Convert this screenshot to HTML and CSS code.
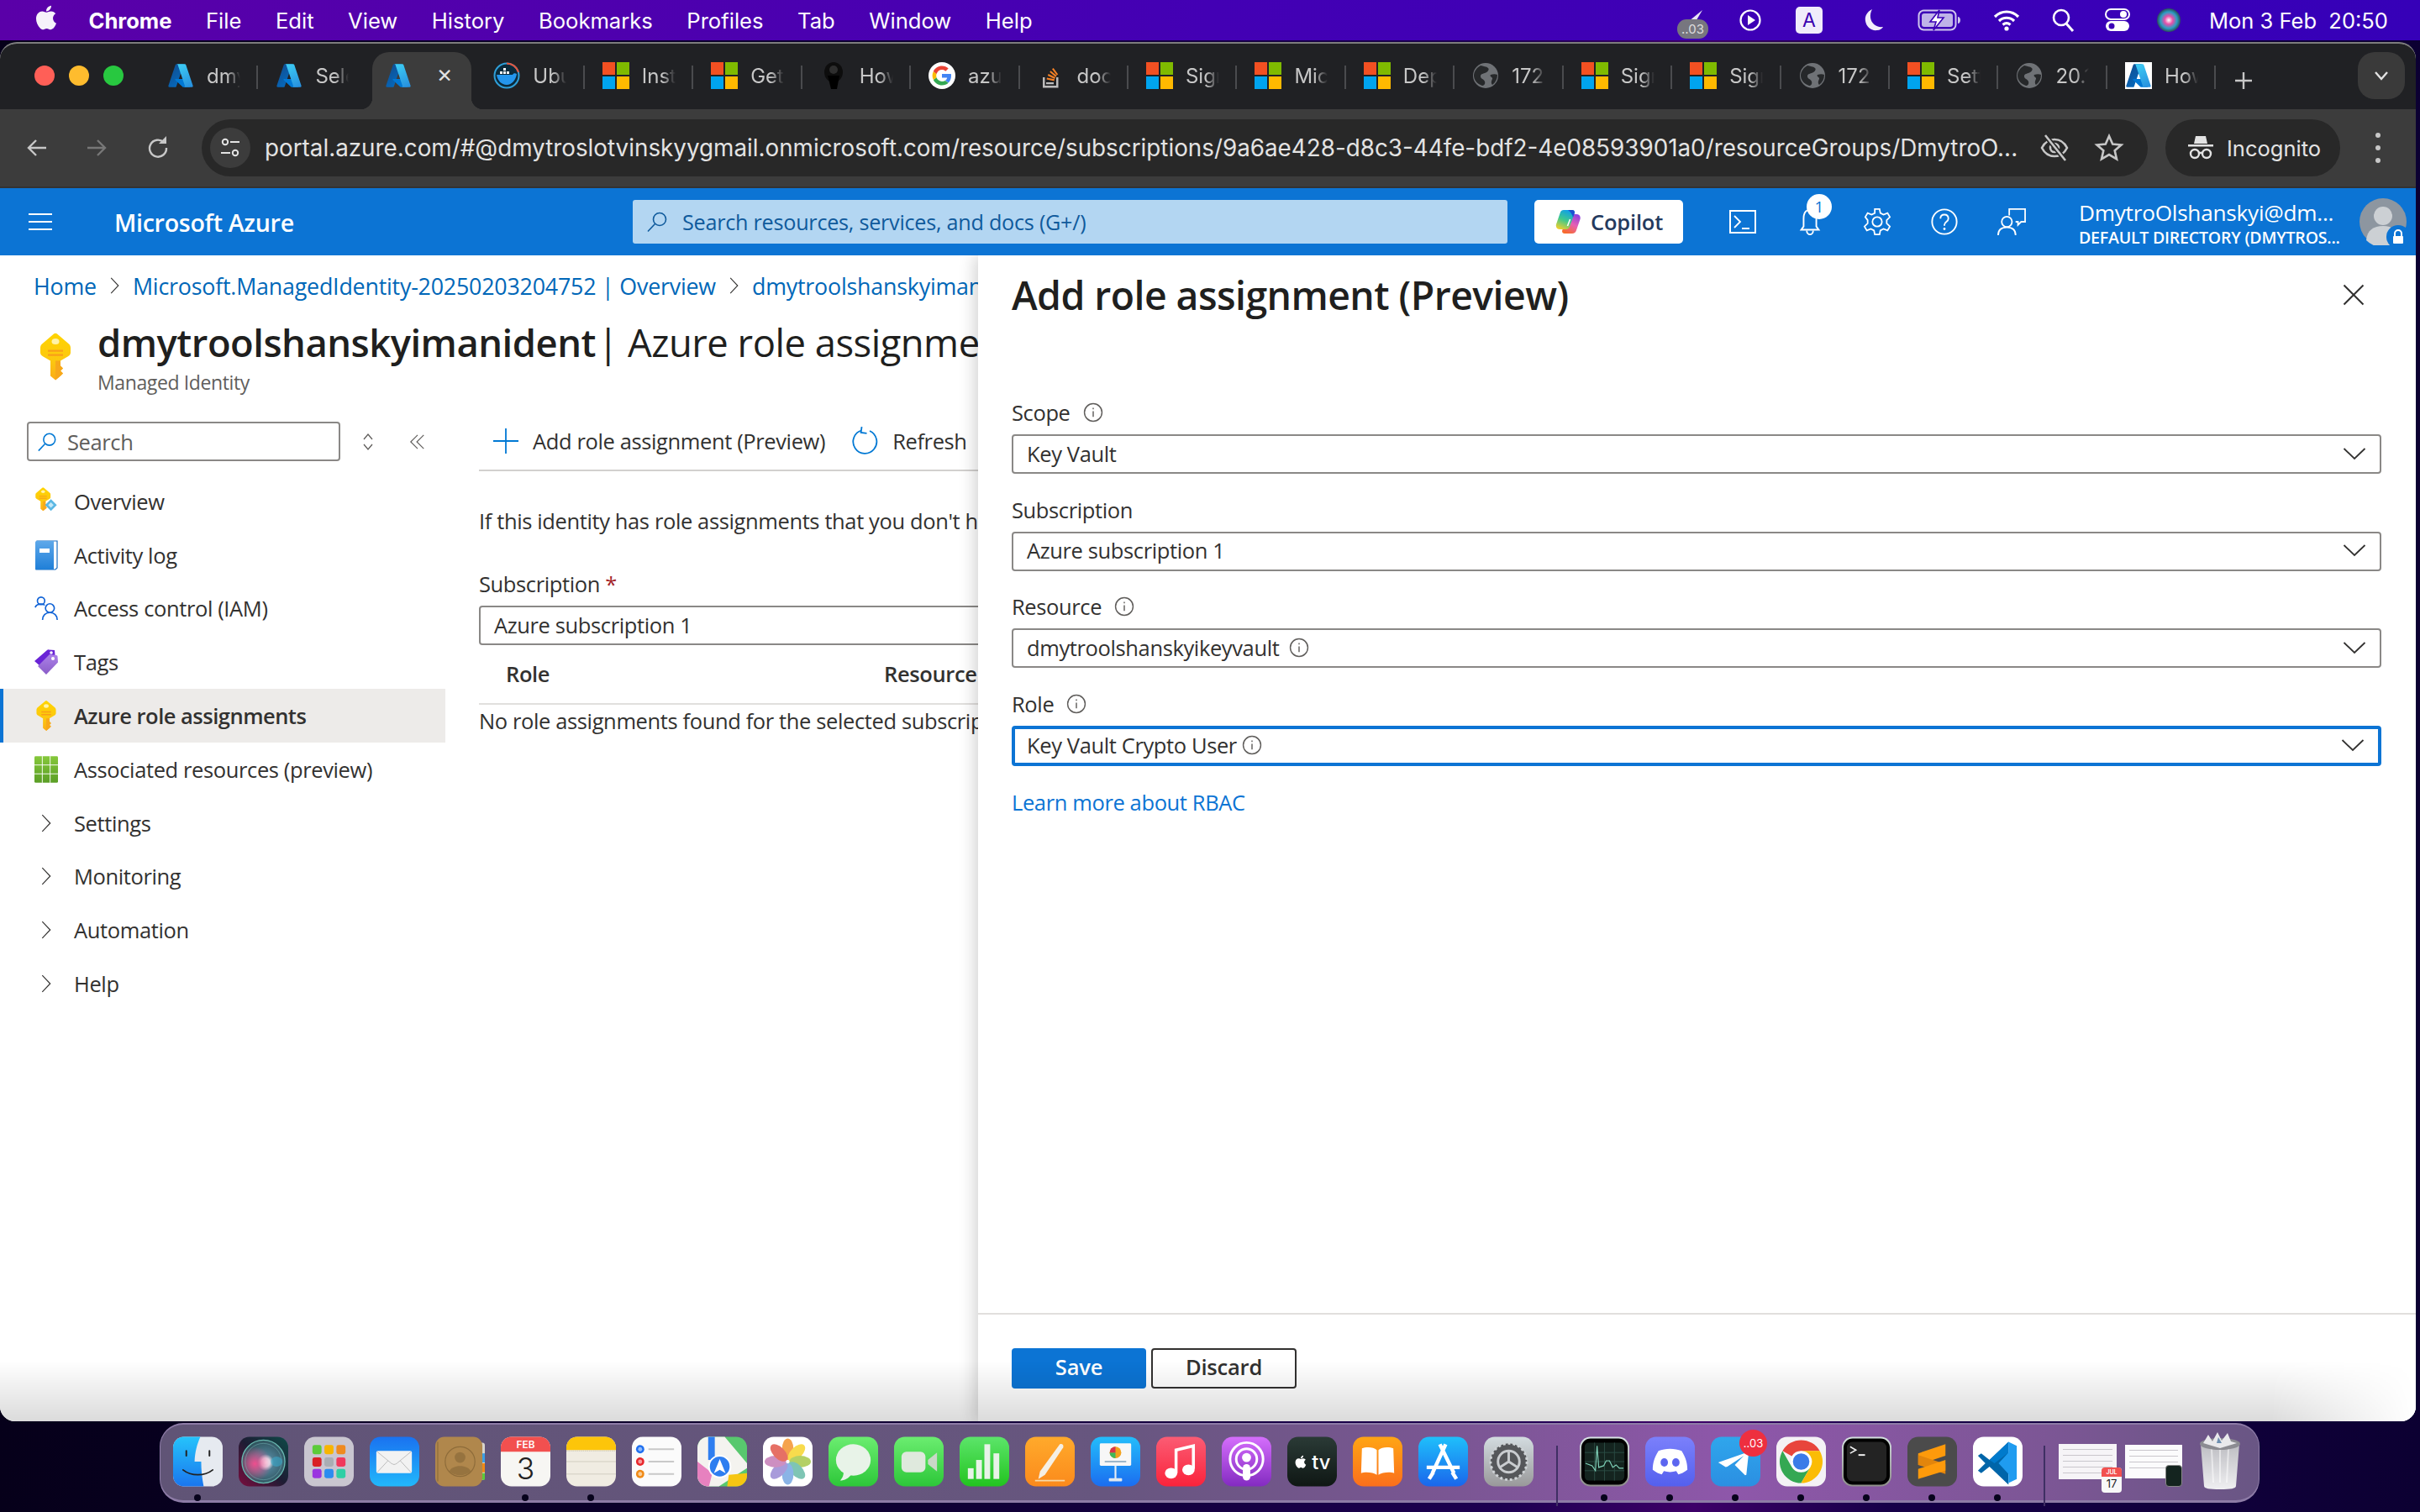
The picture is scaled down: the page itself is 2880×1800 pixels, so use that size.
FILE: index.html
```html
<!DOCTYPE html>
<html lang="en">
<head>
    <meta charset="UTF-8">
    <meta name="viewport" content="width=device-width, initial-scale=1.0">
    <title>Add role assignment - Microsoft Azure</title>
    <link rel="stylesheet" href="styles.css">
</head>
<body>
    <!-- shared icons -->
    <svg class="defs" width="0" height="0">
        <defs>
            <linearGradient id="azA" x1="0" y1="0" x2="0.6" y2="1"><stop offset="0" stop-color="#114a8b"/><stop offset="1" stop-color="#0669bc"/></linearGradient>
            <linearGradient id="azB" x1="0.3" y1="0" x2="0.7" y2="1"><stop offset="0" stop-color="#3ccbf4"/><stop offset="1" stop-color="#2892df"/></linearGradient>
            <linearGradient id="keyg" x1="0" y1="0" x2="0" y2="1"><stop offset="0" stop-color="#ffd400"/><stop offset=".6" stop-color="#fcc710"/><stop offset="1" stop-color="#fbab18"/></linearGradient>
            <symbol id="azure" viewBox="0 0 96 96">
                <path fill="url(#azA)" d="M33.338 6.544h26.038l-27.03 80.087a4.152 4.152 0 0 1-3.933 2.824H8.149a4.145 4.145 0 0 1-3.928-5.47L29.404 9.368a4.152 4.152 0 0 1 3.934-2.825z"/>
                <path fill="#0078d4" d="M71.175 60.261h-41.29a1.911 1.911 0 0 0-1.305 3.309l26.532 24.764a4.171 4.171 0 0 0 2.846 1.121h23.38z"/>
                <path fill="url(#azB)" d="M66.595 9.364a4.145 4.145 0 0 0-3.928-2.82H33.648a4.146 4.146 0 0 1 3.928 2.82l25.184 74.62a4.146 4.146 0 0 1-3.928 5.472h29.02a4.146 4.146 0 0 0 3.927-5.472z"/>
            </symbol>
            <symbol id="ms" viewBox="0 0 32 32">
                <rect width="15" height="15" fill="#f25022"/><rect x="17" width="15" height="15" fill="#7fba00"/>
                <rect y="17" width="15" height="15" fill="#00a4ef"/><rect x="17" y="17" width="15" height="15" fill="#ffb900"/>
            </symbol>
            <symbol id="globe" viewBox="0 0 32 32">
                <circle cx="16" cy="16" r="15" fill="#6f7276"/>
                <path fill="#26282a" d="M10 4c3 1 7 1 9 3s-1 5-4 6-5 1-5 4 4 3 5 6-1 5-3 5C6 26 2 21 2 16S6 6 10 4zM22 15c3-1 6-1 8 0 0 5-2 9-6 12-2-2-1-5 0-7s-4-3-2-5z"/>
            </symbol>
            <symbol id="info" viewBox="0 0 20 20">
                <circle cx="10" cy="10" r="8.700" fill="none" stroke="#605e5c" stroke-width="1.200"/>
                <path d="M10 8.800v5.600M10 5.400v1.400" stroke="#605e5c" stroke-width="1.200" fill="none"/>
            </symbol>
            <symbol id="caret" viewBox="0 0 28 16">
                <path d="M1.500 2 14 14 26.500 2" fill="none" stroke="#323130" stroke-width="1.800"/>
            </symbol>
            <symbol id="nav-chevron" viewBox="0 0 14 26">
                <path d="M1.500 1.500 12.500 13 1.500 24.500" fill="none" stroke="#323130" stroke-width="1.400"/>
            </symbol>
            <symbol id="key" viewBox="0 0 36 56">
                <path fill="url(#keyg)" d="M16 1c1-1 3-1 4 0l14 12c1.500 1.300 2 3 2 5v5c0 2-1 3.500-3 4.700L24 33v6l3 3-3 3 3 3-3 3-6 5-6-5V33l-9-5.300C1 26.500 0 25 0 23v-5c0-2 .5-3.700 2-5z"/>
                <ellipse cx="18" cy="10" rx="4.500" ry="3.500" fill="#fff3a8"/>
                <path fill="#f7941d" d="M9 20h18v2.200H9zM9 25h18v2.200H9z" opacity=".8"/>
                <path fill="#f7a81b" d="M18 33h6v6l3 3-3 3 3 3-3 3-6 5z"/>
            </symbol>
        </defs>
    </svg>

    <div class="menubar">
        <div class="menu-left">
            <svg class="apple" viewBox="0 0 24 24"><path fill="#fff" d="M17.050 20.280c-.98.950-2.050.800-3.080.350-1.090-.460-2.090-.480-3.240 0-1.440.620-2.200.440-3.060-.350C2.790 15.250 3.510 7.590 9.050 7.310c1.350.070 2.290.740 3.080.8 1.180-.240 2.310-.930 3.570-.840 1.510.120 2.650.720 3.400 1.800-3.120 1.870-2.380 5.980.480 7.130-.570 1.500-1.310 2.990-2.540 4.090zM12.030 7.250c-.150-2.230 1.660-4.070 3.740-4.250.290 2.580-2.340 4.500-3.740 4.250z"/></svg>
            <span class="menu-app">Chrome</span>
            <span>File</span><span>Edit</span><span>View</span><span>History</span><span>Bookmarks</span><span>Profiles</span><span>Tab</span><span>Window</span><span>Help</span>
        </div>
        <div class="menu-right">
            <div class="status-tg">
                <svg width="30" height="22" viewBox="0 0 30 22"><path fill="#e8e4f4" d="M28 0 6 18l9 4z"/></svg>
                <span class="status-badge">..03</span>
            </div>
            <svg class="st-play" width="28" height="28" viewBox="0 0 28 28"><circle cx="14" cy="14" r="11.500" fill="none" stroke="#fff" stroke-width="2.200"/><path fill="#fff" d="M11 8l9 6-9 6z"/></svg>
            <span class="status-input">A</span>
            <svg class="st-moon" width="28" height="30" viewBox="0 0 28 30"><path fill="#f2edfb" d="M12 2C6 5 3 10 4 16c1 7 7 12 14 11 3 0 6-2 7-4-8 1-14-4-15-11-.4-4 .4-7 2-10z"/></svg>
            <svg class="st-batt" width="52" height="26" viewBox="0 0 52 26"><rect x="1.500" y="1.500" width="44" height="23" rx="6" fill="none" stroke="#cfc6ee" stroke-width="2"/><rect x="5" y="5" width="37" height="16" rx="3" fill="#bfb3e8"/><path fill="#cfc6ee" d="M48 9c2 0 3 2 3 4s-1 4-3 4z"/><path fill="#fff" stroke="#3b00b6" stroke-width="1.600" d="M26 1 15 15h7l-3 10 12-15h-7z"/></svg>
            <svg class="st-wifi" width="34" height="26" viewBox="0 0 34 26"><path d="M3 9c8-8 20-8 28 0M8 14c5-5 13-5 18 0M12.500 18.500c3-2.500 6-2.500 9 0" fill="none" stroke="#fff" stroke-width="3.200"/><circle cx="17" cy="23" r="2.600" fill="#fff"/></svg>
            <svg class="st-find" width="28" height="30" viewBox="0 0 28 30"><circle cx="12" cy="12" r="9" fill="none" stroke="#fff" stroke-width="2.600"/><path d="M18 19l8 9" stroke="#fff" stroke-width="3"/></svg>
            <svg class="st-ctrl" width="30" height="28" viewBox="0 0 30 28"><rect x="1" y="1" width="28" height="12" rx="6" fill="none" stroke="#fff" stroke-width="2"/><circle cx="22" cy="7" r="4" fill="#fff"/><rect x="1" y="15" width="28" height="12" rx="6" fill="#fff"/><circle cx="8" cy="21" r="3.500" fill="#3b00b6"/></svg>
            <svg class="st-siri" width="30" height="30" viewBox="0 0 30 30"><defs><radialGradient id="siri"><stop offset="0" stop-color="#fff"/><stop offset=".35" stop-color="#e84fa8"/><stop offset=".7" stop-color="#2a9fc4"/><stop offset="1" stop-color="#2b4a5a"/></radialGradient></defs><circle cx="15" cy="15" r="14" fill="url(#siri)"/></svg>
            <span class="clock">Mon 3 Feb&nbsp; 20:50</span>
        </div>
    </div>

    <div class="window">
        <div class="tabstrip">
            <div class="lights"><i class="light red"></i><i class="light yellow"></i><i class="light green"></i></div>
            <div class="tab"><svg class="fav"><use href="#azure"/></svg><span class="tab-title">dmytro</span></div>
            <div class="tab no-sep"><svg class="fav"><use href="#azure"/></svg><span class="tab-title">Select</span></div>
            <div class="tab active no-sep"><svg class="fav"><use href="#azure"/></svg><span class="tab-close">✕</span></div>
            <div class="tab"><svg class="fav" viewBox="0 0 32 32"><circle cx="16" cy="16" r="14.500" fill="#0b2a3a" stroke="#2f9fd8" stroke-width="2"/><path d="M16 1.500A14.500 14.500 0 0 1 30 12" fill="none" stroke="#e2553d" stroke-width="2"/><path fill="#2496ed" d="M4 15h19c1-2 3-2 5-1-1 7-6 13-12 13S5 22 4 15z"/><path fill="#fff" d="M8 11h3v3H8zM12 11h3v3h-3zM16 11h3v3h-3zM12 7h3v3h-3z"/></svg><span class="tab-title">Ubuntu</span></div>
            <div class="tab"><svg class="fav"><use href="#ms"/></svg><span class="tab-title">Install</span></div>
            <div class="tab"><svg class="fav"><use href="#ms"/></svg><span class="tab-title">Get st</span></div>
            <div class="tab"><svg class="fav" viewBox="0 0 32 32"><ellipse cx="16" cy="12" rx="11" ry="12" fill="#0d0d0d"/><path fill="#000" d="M9 16h14l-3 16h-7z"/><circle cx="16" cy="9" r="5" fill="#2e2e2e"/></svg><span class="tab-title">How t</span></div>
            <div class="tab"><svg class="fav" viewBox="0 0 32 32"><circle cx="16" cy="16" r="16" fill="#fff"/><path fill="#4285f4" d="M27 16.300c0-.9-.1-1.600-.2-2.300H16v4.400h6.200c-.3 1.400-1.100 2.600-2.300 3.400l3.700 2.800c2.100-2 3.400-4.900 3.400-8.300z"/><path fill="#34a853" d="M16 27.500c3.100 0 5.700-1 7.600-2.800l-3.700-2.800c-1 .7-2.300 1.100-3.900 1.100-3 0-5.500-2-6.400-4.700L5.800 21c1.900 3.900 5.800 6.500 10.200 6.500z"/><path fill="#fbbc05" d="M9.600 18.300c-.5-1.400-.5-3 0-4.500L5.800 11c-1.600 3.100-1.600 6.900 0 10z"/><path fill="#ea4335" d="M16 9c1.700 0 3.200.6 4.400 1.700l3.300-3.300C21.700 5.500 19 4.500 16 4.500 11.600 4.500 7.700 7.100 5.800 11l3.800 2.900C10.500 11 13 9 16 9z"/></svg><span class="tab-title">azure</span></div>
            <div class="tab"><svg class="fav" viewBox="0 0 32 32"><path fill="#bcbbbb" d="M6 18h2.500v10H22v-10h2.500v12.500H6z"/><path fill="#bcbbbb" d="M10 24h9v2.200h-9z"/><path fill="#f48024" d="M10.500 20.500l9 1.900.5-2.100-9-1.900zM11.800 16l8.300 3.900.9-1.900-8.300-3.900zM14.200 11.800l7.100 5.900 1.300-1.600-7.100-5.900zM18.700 7l-1.700 1.200 5.500 7.400 1.700-1.200z"/></svg><span class="tab-title">docs</span></div>
            <div class="tab"><svg class="fav"><use href="#ms"/></svg><span class="tab-title">Sign in</span></div>
            <div class="tab"><svg class="fav"><use href="#ms"/></svg><span class="tab-title">Micros</span></div>
            <div class="tab"><svg class="fav"><use href="#ms"/></svg><span class="tab-title">Deplo</span></div>
            <div class="tab"><svg class="fav"><use href="#globe"/></svg><span class="tab-title">172.1</span></div>
            <div class="tab"><svg class="fav"><use href="#ms"/></svg><span class="tab-title">Sign in</span></div>
            <div class="tab"><svg class="fav"><use href="#ms"/></svg><span class="tab-title">Sign in</span></div>
            <div class="tab"><svg class="fav"><use href="#globe"/></svg><span class="tab-title">172.1</span></div>
            <div class="tab"><svg class="fav"><use href="#ms"/></svg><span class="tab-title">Settin</span></div>
            <div class="tab"><svg class="fav"><use href="#globe"/></svg><span class="tab-title">20.12</span></div>
            <div class="tab"><svg class="fav fav-white"><use href="#azure"/></svg><span class="tab-title">How t</span></div>
            <svg class="new-tab" viewBox="0 0 24 24"><path d="M12 2v20M2 12h20" stroke="#c7c7c7" stroke-width="2.400"/></svg>
            <div class="tab-search"><svg width="18" height="12" viewBox="0 0 18 12"><path d="M2 2l7 8 7-8" fill="none" stroke="#e3e3e3" stroke-width="2.400"/></svg></div>
        </div>

        <div class="toolbar">
            <svg class="nav-btn" viewBox="0 0 28 28"><path d="M25 14H4M13 5l-9 9 9 9" fill="none" stroke="#c7c7c7" stroke-width="2.400"/></svg>
            <svg class="nav-btn nav-forward" viewBox="0 0 28 28"><path d="M3 14h21M15 5l9 9-9 9" fill="none" stroke="#777" stroke-width="2.400"/></svg>
            <svg class="nav-btn nav-reload" viewBox="0 0 28 28"><path d="M21 7.500A10 10 0 1 0 24 14" fill="none" stroke="#c7c7c7" stroke-width="2.400"/><path fill="#c7c7c7" d="M15 9h9V0z"/></svg>
            <div class="urlbar">
                <div class="site-info"><svg width="26" height="26" viewBox="0 0 26 26"><circle cx="7" cy="6" r="3.200" fill="none" stroke="#e3e3e3" stroke-width="2"/><path d="M13 6h11M2 19h11" stroke="#e3e3e3" stroke-width="2.200"/><circle cx="19" cy="19" r="3.200" fill="none" stroke="#e3e3e3" stroke-width="2"/></svg></div>
                <span class="url">portal.azure.com/#@dmytroslotvinskyygmail.onmicrosoft.com/resource/subscriptions/9a6ae428-d8c3-44fe-bdf2-4e08593901a0/resourceGroups/DmytroO...</span>
                <svg class="url-icon" viewBox="0 0 36 36"><path d="M3 18c3-6 8-10 15-10s12 4 15 10c-3 6-8 10-15 10S6 24 3 18z" fill="none" stroke="#c7c7c7" stroke-width="2.600"/><circle cx="18" cy="18" r="5" fill="none" stroke="#c7c7c7" stroke-width="2.600"/><path d="M7 3l24 30" stroke="#282828" stroke-width="6"/><path d="M7 3l24 30" stroke="#c7c7c7" stroke-width="2.600"/></svg>
                <svg class="url-icon url-star" viewBox="0 0 36 36"><path d="M18 4l4.200 9.500 10.300 1-7.800 6.800 2.300 10.100-9-5.300-9 5.300 2.300-10.100L3.500 14.500l10.300-1z" fill="none" stroke="#c7c7c7" stroke-width="2.600"/></svg>
            </div>
            <div class="incognito">
                <svg width="34" height="30" viewBox="0 0 34 30"><path fill="#e3e3e3" d="M11 1h12l2 9H9zM2 11h30v2.400H2z"/><circle cx="10" cy="22" r="5" fill="none" stroke="#e3e3e3" stroke-width="2.400"/><circle cx="24" cy="22" r="5" fill="none" stroke="#e3e3e3" stroke-width="2.400"/><path d="M15 21h4" stroke="#e3e3e3" stroke-width="2.400"/></svg>
                <span>Incognito</span>
            </div>
            <div class="kebab"><i></i><i></i><i></i></div>
        </div>

        <div class="azurebar">
            <div class="hamburger"><i></i><i></i><i></i></div>
            <span class="brand">Microsoft Azure</span>
            <div class="global-search">
                <svg width="26" height="26" viewBox="0 0 26 26"><circle cx="16" cy="10" r="7.500" fill="none" stroke="#0f5a9c" stroke-width="1.600"/><path d="M10.500 15.500 2 24.500" stroke="#0f5a9c" stroke-width="1.600"/></svg>
                <span>Search resources, services, and docs (G+/)</span>
            </div>
            <div class="copilot">
                <svg width="30" height="28" viewBox="0 0 30 28"><defs><linearGradient id="cpA" x1="0.6" y1="0" x2="0.2" y2="1"><stop offset="0" stop-color="#0f9fe8"/><stop offset=".5" stop-color="#3fc98c"/><stop offset="1" stop-color="#f2cf2b"/></linearGradient><linearGradient id="cpB" x1="0.8" y1="0" x2="0.3" y2="1"><stop offset="0" stop-color="#8a3fe0"/><stop offset=".5" stop-color="#e65fb4"/><stop offset="1" stop-color="#f76b2d"/></linearGradient></defs><path fill="url(#cpB)" d="M20 28h-9c-2.500 0-3.500-2-2.700-4l5.700-16c.8-2 2-3 4-3h7c3.200 0 5.500 2.200 4.500 6l-4.500 13c-.7 2.500-2.500 4-5 4z"/><path fill="url(#cpA)" d="M10 0h10c2.500 0 3.500 2 2.700 4L17 20c-.8 2-2 3-4 3H5.500C2.300 23 0 20.800 1 17L5.500 4C6.200 1.500 7.500 0 10 0z"/><path fill="#1c50d0" d="M15 0h5c2.500 0 3.500 2 2.700 4l-1.700 5c-1-4-3-7-6-9z"/><path stroke="#fff" stroke-width="1.600" d="M17.500 11l-3 8"/></svg>
                <span>Copilot</span>
            </div>
            <svg class="bar-icon bar-first" viewBox="0 0 34 34"><rect x="2" y="4" width="30" height="26" fill="none" stroke="#fff" stroke-width="2"/><path d="M7 10l7 7-7 7M16 25h9" fill="none" stroke="#fff" stroke-width="1.800"/></svg>
            <div class="bar-bell">
                <svg class="bar-icon" viewBox="0 0 36 36"><path d="M18 3c-6 0-8 5-8 11v10l-3 4h22l-3-4V14c0-6-2-11-8-11z" fill="none" stroke="#fff" stroke-width="2"/><path d="M14 29c0 3 2 5 4 5s4-2 4-5" fill="none" stroke="#fff" stroke-width="2"/></svg>
                <span class="bell-badge">1</span>
            </div>
            <svg class="bar-icon" viewBox="0 0 36 36"><path d="M15 2h6l1 5 4 2 5-2 3 5-4 4v4l4 4-3 5-5-2-4 2-1 5h-6l-1-5-4-2-5 2-3-5 4-4v-4L3 12l3-5 5 2 4-2z" fill="none" stroke="#fff" stroke-width="1.900"/><circle cx="18" cy="18" r="6" fill="none" stroke="#fff" stroke-width="1.900"/></svg>
            <svg class="bar-icon" viewBox="0 0 36 36"><circle cx="18" cy="18" r="15.500" fill="none" stroke="#fff" stroke-width="2"/><path d="M13 14c0-3 2-5 5-5s5 2 5 5c0 4-5 4-5 8v1" fill="none" stroke="#fff" stroke-width="2"/><circle cx="18" cy="27" r="1.500" fill="#fff"/></svg>
            <svg class="bar-icon" viewBox="0 0 36 36"><path d="M15 10V2h20v16h-5l-4 4v-4h-3" fill="none" stroke="#fff" stroke-width="1.900"/><circle cx="12" cy="18" r="6.500" fill="none" stroke="#fff" stroke-width="1.900"/><path d="M1 35c0-7 4-10 11-10s11 3 11 10" fill="none" stroke="#fff" stroke-width="1.900"/></svg>
            <div class="account">
                <div class="account-name">DmytroOlshanskyi@dm...</div>
                <div class="account-dir">DEFAULT DIRECTORY (DMYTROS...</div>
            </div>
            <div class="avatar">
                <svg width="56" height="56" viewBox="0 0 56 56"><circle cx="28" cy="28" r="28" fill="#8d96a0"/><circle cx="28" cy="21" r="11" fill="#ccd0d4"/><path fill="#ccd0d4" d="M8 50c1-12 9-17 20-17s19 5 20 17a28 28 0 0 1-40 0z"/></svg>
                <span class="avatar-lock"><svg width="16" height="20" viewBox="0 0 16 20"><path d="M4 9V6a4 4 0 0 1 8 0v3" fill="none" stroke="#fff" stroke-width="2"/><rect x="2" y="9" width="12" height="9" rx="1" fill="#fff"/></svg></span>
            </div>
        </div>

        <div class="portal">
            <div class="breadcrumb">
                <a>Home</a><svg class="crumb-sep"><use href="#nav-chevron"/></svg>
                <a>Microsoft.ManagedIdentity-20250203204752 | Overview</a><svg class="crumb-sep"><use href="#nav-chevron"/></svg>
                <a>dmytroolshanskyimanident</a>
            </div>
            <div class="resource-header">
                <svg class="resource-key"><use href="#key"/></svg>
                <div>
                    <h1 class="resource-title"><b>dmytroolshanskyimanident</b> | Azure role assignments</h1>
                    <div class="resource-sub">Managed Identity</div>
                </div>
            </div>
            <div class="resource-body">
                <div class="sidebar">
                    <div class="side-top">
                        <div class="side-search">
                            <svg width="24" height="26" viewBox="0 0 26 26"><circle cx="16" cy="10" r="7.500" fill="none" stroke="#0078d4" stroke-width="1.700"/><path d="M10.500 15.500 2 24.500" stroke="#0078d4" stroke-width="1.700"/></svg>
                            <span>Search</span>
                        </div>
                        <svg class="side-sort" viewBox="0 0 14 24"><path d="M2 9l5-6 5 6M2 15l5 6 5-6" fill="none" stroke="#605e5c" stroke-width="1.300"/></svg>
                        <svg class="side-collapse" viewBox="0 0 22 22"><path d="M11 2l-9 9 9 9M19 2l-9 9 9 9" fill="none" stroke="#605e5c" stroke-width="1.300"/></svg>
                    </div>
                    <ul class="nav">
                        <li><svg class="nav-icon" viewBox="0 0 30 36"><use href="#key" width="20" height="30" x="1" y="0"/><path fill="#5bb7e3" d="M21 15l7.500 7.500L21 30l-7.500-7.500z"/><path fill="#c2e8f8" d="M21 19l3.500 3.500L21 26l-3.500-3.500z"/></svg><span>Overview</span></li>
                        <li><svg class="nav-icon" viewBox="0 0 28 36"><defs><linearGradient id="bookg" x1="0" y1="0" x2="0" y2="1"><stop offset="0" stop-color="#5ea8ea"/><stop offset="1" stop-color="#1f7fd8"/></linearGradient></defs><path fill="#fff" stroke="#1b6ec2" stroke-width="1.200" d="M3 1h24v32l-2 2H2z"/><path fill="url(#bookg)" d="M1 2.500C1 1.500 2 1 3 1h20v34H2c-.6 0-1-.4-1-1z"/><rect x="6" y="10" width="12" height="5" fill="#fff"/></svg><span>Activity log</span></li>
                        <li><svg class="nav-icon" viewBox="0 0 32 34"><circle cx="9" cy="7" r="5" fill="none" stroke="#0f62d6" stroke-width="1.900"/><path d="M1 16c1-3 4-4.500 8-4.500 2 0 4 .5 5 1.500" fill="none" stroke="#0f62d6" stroke-width="1.900"/><circle cx="21" cy="17" r="6" fill="none" stroke="#0f62d6" stroke-width="1.900"/><path d="M11 33c0-6 4-10 10-10s10 4 10 10" fill="none" stroke="#0f62d6" stroke-width="1.900"/></svg><span>Access control (IAM)</span></li>
                        <li><svg class="nav-icon" viewBox="0 0 28 30"><defs><linearGradient id="tagg" x1="0" y1="0" x2="0" y2="1"><stop offset="0" stop-color="#ac82e8"/><stop offset="1" stop-color="#8a5cc8"/></linearGradient></defs><path fill="#6a24d6" d="M0 14 15 1c.7-.6 1.300-.7 2-.6l7 .6.500 6L8 21z"/><path fill="url(#tagg)" d="M4 20 18 6l8 1c1 .2 1.500.7 1.500 1.500l.5 7L14 30z"/><circle cx="22" cy="11" r="2" fill="#fff"/><circle cx="20" cy="4" r="1.800" fill="#fff"/></svg><span>Tags</span></li>
                        <li class="current"><svg class="nav-icon"><use href="#key"/></svg><span>Azure role assignments</span></li>
                        <li><svg class="nav-icon" viewBox="0 0 30 34"><defs><linearGradient id="gridg" x1="0" y1="0" x2="0" y2="1"><stop offset="0" stop-color="#86c83b"/><stop offset="1" stop-color="#5a9e25"/></linearGradient></defs><rect width="30" height="34" rx="1.500" fill="url(#gridg)"/><path d="M10 0v34M20 0v34M0 11.300h30M0 22.600h30" stroke="#fff" stroke-width="1"/></svg><span>Associated resources (preview)</span></li>
                        <li><svg class="nav-chev"><use href="#nav-chevron"/></svg><span>Settings</span></li>
                        <li><svg class="nav-chev"><use href="#nav-chevron"/></svg><span>Monitoring</span></li>
                        <li><svg class="nav-chev"><use href="#nav-chevron"/></svg><span>Automation</span></li>
                        <li><svg class="nav-chev"><use href="#nav-chevron"/></svg><span>Help</span></li>
                    </ul>
                </div>
                <div class="content">
                    <div class="cmdbar">
                        <span class="cmd"><svg width="30" height="30" viewBox="0 0 30 30"><path d="M15 0v30M0 15h30" stroke="#0078d4" stroke-width="1.800"/></svg>Add role assignment (Preview)</span>
                        <span class="cmd"><svg width="32" height="34" viewBox="0 0 32 34"><path d="M12 4.500A14 14 0 1 0 22 5" fill="none" stroke="#0078d4" stroke-width="1.800"/><path d="M12 0v7h7" fill="none" stroke="#0078d4" stroke-width="1.800" transform="rotate(8 12 4)"/></svg>Refresh</span>
                    </div>
                    <p class="content-note">If this identity has role assignments that you don't have permission to read, they won't be shown in the list.</p>
                    <div class="content-label">Subscription <span class="required">*</span></div>
                    <div class="content-select">Azure subscription 1</div>
                    <div class="grid-head"><span class="col-role">Role</span><span>Resource</span></div>
                    <p class="grid-empty">No role assignments found for the selected subscription.</p>
                </div>
            </div>

            <div class="blade">
                <div class="blade-head">
                    <h2>Add role assignment (Preview)</h2>
                    <svg class="blade-close" viewBox="0 0 26 26"><path d="M1.500 1.500l23 23M24.500 1.500l-23 23" stroke="#323130" stroke-width="2"/></svg>
                </div>
                <div class="field">
                    <label>Scope <svg class="info"><use href="#info"/></svg></label>
                    <div class="select"><span>Key Vault</span><svg class="caret"><use href="#caret"/></svg></div>
                </div>
                <div class="field">
                    <label>Subscription</label>
                    <div class="select"><span>Azure subscription 1</span><svg class="caret"><use href="#caret"/></svg></div>
                </div>
                <div class="field">
                    <label>Resource <svg class="info"><use href="#info"/></svg></label>
                    <div class="select"><span>dmytroolshanskyikeyvault</span><svg class="info"><use href="#info"/></svg><svg class="caret"><use href="#caret"/></svg></div>
                </div>
                <div class="field">
                    <label>Role <svg class="info"><use href="#info"/></svg></label>
                    <div class="select focused"><span>Key Vault Crypto User</span><svg class="info"><use href="#info"/></svg><svg class="caret"><use href="#caret"/></svg></div>
                </div>
                <a class="learn-more">Learn more about RBAC</a>
                <div class="blade-foot">
                    <button class="btn btn-primary">Save</button>
                    <button class="btn btn-default">Discard</button>
                </div>
            </div>
            <div class="dock-shade"></div>
        </div>
    </div>

    <div class="dock">
        <div class="dock-item running"><svg viewBox="0 0 60 60"><defs><linearGradient id="fd1" x1="0" y1="0" x2="0" y2="1"><stop offset="0" stop-color="#25c3fb"/><stop offset="1" stop-color="#1a76ee"/></linearGradient></defs><rect width="60" height="60" rx="13" fill="#e6eaf0"/><path fill="url(#fd1)" d="M13 0h20c-4 9-6.500 18-7 30h8c0 10 1 20 3 30H13A13 13 0 0 1 0 47V13A13 13 0 0 1 13 0z"/><path d="M16 17v6M44 17v6" stroke="#222" stroke-width="2" stroke-linecap="round"/><path d="M12 40c10 8 26 8 36 0" fill="none" stroke="#222" stroke-width="1.800" stroke-linecap="round"/></svg></div>
        <div class="dock-item"><svg viewBox="0 0 60 60"><defs><radialGradient id="sr" cx=".55" cy=".52" r=".55"><stop offset="0" stop-color="#fff"/><stop offset=".18" stop-color="#dfeaf0"/><stop offset=".35" stop-color="#4d7d92"/><stop offset="1" stop-color="#2c4f58"/></radialGradient><radialGradient id="srp" cx=".3" cy=".55" r=".4"><stop offset="0" stop-color="#ef4e8e"/><stop offset="1" stop-color="#ef4e8e" stop-opacity="0"/></radialGradient><linearGradient id="srb" x1="0" y1="1" x2="1" y2="0"><stop offset="0" stop-color="#7a0d3e"/><stop offset=".5" stop-color="#1d1c33"/><stop offset="1" stop-color="#0f4a48"/></linearGradient></defs><rect width="60" height="60" rx="13" fill="url(#srb)"/><circle cx="30" cy="30" r="26" fill="url(#sr)"/><circle cx="30" cy="30" r="26" fill="url(#srp)"/><circle cx="30" cy="30" r="26" fill="none" stroke="#68b8b0" stroke-width="1.400"/><circle cx="30" cy="30" r="22" fill="none" stroke="#8cc" stroke-opacity=".4"/><ellipse cx="46" cy="30" rx="7" ry="6" fill="#3aa6c8" opacity=".6"/></svg></div>
        <div class="dock-item"><svg viewBox="0 0 60 60"><rect width="60" height="60" rx="13" fill="#c9c6d0"/><rect x="10" y="10" width="11" height="11" rx="2.500" fill="#5ccb3a"/><rect x="24.500" y="10" width="11" height="11" rx="2.500" fill="#f7b500"/><rect x="39" y="10" width="11" height="11" rx="2.500" fill="#ef8a1f"/><rect x="10" y="25" width="11" height="11" rx="2.500" fill="#d91f26"/><rect x="24.500" y="25" width="11" height="11" rx="2.500" fill="#a9adb3"/><rect x="39" y="25" width="11" height="11" rx="2.500" fill="#f0395d"/><rect x="10" y="39" width="11" height="11" rx="2.500" fill="#9a35e0"/><rect x="24.500" y="39" width="11" height="11" rx="2.500" fill="#2b8cf0"/><rect x="39" y="39" width="11" height="11" rx="2.500" fill="#2dcfa5"/></svg></div>
        <div class="dock-item"><svg viewBox="0 0 60 60"><defs><linearGradient id="ml" x1="0" y1="0" x2="0" y2="1"><stop offset="0" stop-color="#1a72f0"/><stop offset="1" stop-color="#22b8fb"/></linearGradient></defs><rect width="60" height="60" rx="13" fill="url(#ml)"/><rect x="8" y="17" width="43" height="27" rx="2" fill="#f2f2f2"/><path d="M9 18l17 14c2.500 2 4.500 2 7 0l17-14M9 43l13-14M50 43 37 29" fill="none" stroke="#bdbdbd" stroke-width="1"/></svg></div>
        <div class="dock-item"><svg viewBox="0 0 60 60"><rect x="50" y="7" width="10" height="45" rx="3" fill="#d9d5cc"/><rect x="54" y="20" width="6" height="11" fill="#3aa0e8"/><rect x="54" y="32" width="6" height="11" fill="#f08a16"/><rect x="54" y="44" width="6" height="8" fill="#5ccb3a"/><rect width="57" height="60" rx="11" fill="#b0874c"/><path d="M3 6v48" stroke="#8e6c3a" stroke-width="1.200"/><circle cx="30" cy="30" r="18" fill="none" stroke="#8e6c3a" stroke-width="1.200"/><circle cx="30" cy="25" r="6.500" fill="#96733f"/><path fill="#96733f" d="M17 42c3-9 23-9 26 0-7 6-19 6-26 0z"/></svg></div>
        <div class="dock-item running"><svg viewBox="0 0 60 60"><rect width="60" height="60" rx="13" fill="#f7f6f3"/><path fill="#f2504f" d="M13 0h34a13 13 0 0 1 13 13v5H0v-5A13 13 0 0 1 13 0z"/><text x="30" y="14" class="dock-cal-m">FEB</text><text x="30" y="51" class="dock-cal-d">3</text></svg></div>
        <div class="dock-item running"><svg viewBox="0 0 60 60"><rect width="60" height="60" rx="13" fill="#f0ece2"/><path fill="#fdc50a" d="M13 0h34a13 13 0 0 1 13 13v3H0v-3A13 13 0 0 1 13 0z"/><path d="M0 17h60" stroke="#c9c3b2" stroke-dasharray="1.500 1"/><path d="M0 30h60M0 45h60" stroke="#dcd8cc" stroke-width="1.500"/></svg></div>
        <div class="dock-item"><svg viewBox="0 0 60 60"><rect width="60" height="60" rx="13" fill="#fbfbfb"/><circle cx="10" cy="15" r="5" fill="#1f6ff0"/><circle cx="10" cy="15" r="2.500" fill="#8fbafa"/><circle cx="10" cy="30" r="5" fill="#e8262b"/><circle cx="10" cy="30" r="2.500" fill="#f79a9c"/><circle cx="10" cy="45" r="5" fill="#f08a16"/><circle cx="10" cy="45" r="2.500" fill="#f9cc95"/><path d="M20 15h31M20 30h31M20 45h31" stroke="#c9c9c9" stroke-width="2"/></svg></div>
        <div class="dock-item"><svg viewBox="0 0 60 60"><rect width="60" height="60" rx="13" fill="#58c86e"/><path fill="#f4f3ef" d="M0 13C0 6 6 0 13 0h20L60 32v6L26 60H13A13 13 0 0 1 0 47z"/><path fill="#e781bf" d="M0 30l18 14-4 16h-1A13 13 0 0 1 0 47z"/><path fill="#f6c612" d="M36 60l2-14 22-2v3a13 13 0 0 1-13 13z"/><path fill="#2e7ef0" d="M13 0h8v28h-8z"/><circle cx="27" cy="36" r="13" fill="#2e7ef0" stroke="#fff" stroke-width="2"/><path fill="#fff" d="M27 27l7 17-7-4-7 4z"/></svg></div>
        <div class="dock-item"><svg viewBox="0 0 60 60"><rect width="60" height="60" rx="13" fill="#fff"/><g opacity=".78" transform="translate(30 30)"><ellipse cy="-15" rx="7" ry="13" fill="#f38a1c"/><ellipse cy="-15" rx="7" ry="13" fill="#f7d21c" transform="rotate(45)"/><ellipse cy="-15" rx="7" ry="13" fill="#9fc33a" transform="rotate(90)"/><ellipse cy="-15" rx="7" ry="13" fill="#5bb6a0" transform="rotate(135)"/><ellipse cy="-15" rx="7" ry="13" fill="#6aa0e0" transform="rotate(180)"/><ellipse cy="-15" rx="7" ry="13" fill="#9080d0" transform="rotate(225)"/><ellipse cy="-15" rx="7" ry="13" fill="#c070b0" transform="rotate(270)"/><ellipse cy="-15" rx="7" ry="13" fill="#e0483a" transform="rotate(315)"/></g></svg></div>
        <div class="dock-item"><svg viewBox="0 0 60 60"><defs><linearGradient id="msg" x1="0" y1="0" x2="0" y2="1"><stop offset="0" stop-color="#6bed70"/><stop offset="1" stop-color="#2dc739"/></linearGradient></defs><rect width="60" height="60" rx="13" fill="url(#msg)"/><ellipse cx="30" cy="28" rx="21" ry="19" fill="#e8f3e8"/><path fill="#e8f3e8" d="M18 40c1 6-1 10-4 13 5 0 11-3 14-8z"/></svg></div>
        <div class="dock-item"><svg viewBox="0 0 60 60"><defs><linearGradient id="ftm" x1="0" y1="0" x2="0" y2="1"><stop offset="0" stop-color="#6bed70"/><stop offset="1" stop-color="#2dc739"/></linearGradient></defs><rect width="60" height="60" rx="13" fill="url(#ftm)"/><rect x="9" y="18" width="29" height="25" rx="6" fill="#dfe9dd"/><path fill="#c9d7c7" d="M41 28l11-9v23l-11-9z"/></svg></div>
        <div class="dock-item"><svg viewBox="0 0 60 60"><defs><linearGradient id="num" x1="0" y1="0" x2="0" y2="1"><stop offset="0" stop-color="#5ce56a"/><stop offset="1" stop-color="#22c41f"/></linearGradient></defs><rect width="60" height="60" rx="13" fill="url(#num)"/><rect x="10" y="38" width="7" height="13" fill="#e8f3e8"/><rect x="20" y="28" width="7" height="23" fill="#e8f3e8"/><rect x="30" y="9" width="7" height="42" fill="#e8f3e8"/><rect x="41" y="20" width="7" height="31" fill="#e8f3e8"/></svg></div>
        <div class="dock-item"><svg viewBox="0 0 60 60"><defs><linearGradient id="pg" x1="0" y1="0" x2="0" y2="1"><stop offset="0" stop-color="#ffaa2b"/><stop offset="1" stop-color="#fb8a1c"/></linearGradient></defs><rect width="60" height="60" rx="13" fill="url(#pg)"/><path fill="#f5efe4" d="M42 9c3-1 5 1 4 4L24 46l-8 5 2-9z"/><path d="M12 53h36" stroke="#f7d9a8" stroke-width="2"/></svg></div>
        <div class="dock-item"><svg viewBox="0 0 60 60"><defs><linearGradient id="kn" x1="0" y1="0" x2="0" y2="1"><stop offset="0" stop-color="#23bdfb"/><stop offset="1" stop-color="#1b6df0"/></linearGradient></defs><rect width="60" height="60" rx="13" fill="url(#kn)"/><rect x="11" y="8" width="38" height="27" rx="1.500" fill="#f7f7f7"/><circle cx="30" cy="19" r="7" fill="#f3a21c"/><path fill="#3fb85b" d="M30 19v7a7 7 0 0 1-7-7z"/><path fill="#d8344c" d="M30 12a7 7 0 0 0-7 7h7z"/><path d="M17 30h26" stroke="#9fb7c9" stroke-width="2"/><path d="M30 35v16" stroke="#e6eef5" stroke-width="2.200"/><rect x="22" y="50" width="16" height="4" rx="1" fill="#dfe8ef"/></svg></div>
        <div class="dock-item"><svg viewBox="0 0 60 60"><defs><linearGradient id="mu" x1="0" y1="0" x2="0" y2="1"><stop offset="0" stop-color="#fb5c74"/><stop offset="1" stop-color="#fa233b"/></linearGradient></defs><rect width="60" height="60" rx="13" fill="url(#mu)"/><path d="M24 44V16l21-5v28" fill="none" stroke="#fff" stroke-width="3.600"/><ellipse cx="18" cy="44" rx="7.500" ry="6.500" fill="#fff"/><ellipse cx="39" cy="40" rx="7.500" ry="6.500" fill="#fff"/></svg></div>
        <div class="dock-item"><svg viewBox="0 0 60 60"><defs><linearGradient id="pod" x1="0" y1="0" x2="0" y2="1"><stop offset="0" stop-color="#d56efc"/><stop offset="1" stop-color="#832bc1"/></linearGradient></defs><rect width="60" height="60" rx="13" fill="url(#pod)"/><circle cx="30" cy="27" r="20" fill="none" stroke="#fff" stroke-width="3"/><circle cx="30" cy="27" r="12.500" fill="none" stroke="#fff" stroke-width="3"/><circle cx="30" cy="25" r="5.500" fill="#fff"/><rect x="25.500" y="33" width="9" height="20" rx="4.500" fill="#fff"/></svg></div>
        <div class="dock-item"><svg viewBox="0 0 60 60"><defs><linearGradient id="atv" x1="0" y1="0" x2="0" y2="1"><stop offset="0" stop-color="#2a3a36"/><stop offset="1" stop-color="#0f1714"/></linearGradient></defs><rect width="60" height="60" rx="13" fill="url(#atv)"/><g transform="translate(6 20) scale(.85)"><path fill="#fff" d="M17.050 20.280c-.98.950-2.050.800-3.080.350-1.090-.460-2.090-.480-3.240 0-1.440.620-2.200.440-3.060-.350C2.790 15.250 3.510 7.590 9.050 7.310c1.350.070 2.290.740 3.080.8 1.180-.240 2.310-.930 3.570-.840 1.510.120 2.650.720 3.400 1.800-3.120 1.870-2.380 5.980.480 7.130-.570 1.500-1.310 2.990-2.540 4.090zM12.030 7.250c-.150-2.230 1.660-4.070 3.740-4.250.290 2.580-2.340 4.500-3.740 4.250z"/></g><text x="41" y="39" class="dock-tv">tv</text></svg></div>
        <div class="dock-item"><svg viewBox="0 0 60 60"><defs><linearGradient id="bk" x1="0" y1="0" x2="0" y2="1"><stop offset="0" stop-color="#ffa514"/><stop offset="1" stop-color="#fb6f1c"/></linearGradient></defs><rect width="60" height="60" rx="13" fill="url(#bk)"/><path fill="#fff" d="M29 16c-4-4-13-4-18-2l-1 30c5-2 15-1 19 2zM31 16c4-4 13-4 18-2l1 30c-5-2-15-1-19 2z"/></svg></div>
        <div class="dock-item"><svg viewBox="0 0 60 60"><defs><linearGradient id="as" x1="0" y1="0" x2="0" y2="1"><stop offset="0" stop-color="#1fc0fb"/><stop offset="1" stop-color="#1a66ec"/></linearGradient></defs><rect width="60" height="60" rx="13" fill="url(#as)"/><path d="M33 9 17 44M26 9l17 35M10 37h40M13 51l5-8M46 51l-5-8" stroke="#fff" stroke-width="4.500" fill="none"/></svg></div>
        <div class="dock-item"><svg viewBox="0 0 60 60"><defs><linearGradient id="st" x1="0" y1="0" x2="0" y2="1"><stop offset="0" stop-color="#d3dce0"/><stop offset="1" stop-color="#99999a"/></linearGradient></defs><rect width="60" height="60" rx="13" fill="url(#st)"/><circle cx="30" cy="30" r="22" fill="#55575a"/><circle cx="30" cy="30" r="22" fill="none" stroke="#cfd3d6" stroke-width="3" stroke-dasharray="3 3"/><circle cx="30" cy="30" r="13" fill="none" stroke="#c9cccf" stroke-width="3"/><path d="M30 30V17M30 30 19 37M30 30l11 7" stroke="#c9cccf" stroke-width="3"/></svg></div>
        <i class="dock-sep"></i>
        <div class="dock-item running"><svg viewBox="0 0 60 60"><defs><linearGradient id="amg" x1="0" y1="0" x2="0" y2="1"><stop offset="0" stop-color="#d9e4e6"/><stop offset="1" stop-color="#8d8d8a"/></linearGradient></defs><rect width="60" height="60" rx="13" fill="url(#amg)"/><rect x="2" y="2" width="56" height="56" rx="11" fill="#000"/><rect x="6" y="7" width="48" height="46" rx="5" fill="#14241f"/><path d="M6 19h48M6 30h48M6 41h48M18 7v46M30 7v46M42 7v46" stroke="#2a4a42"/><path d="M7 32l8 3 4 6 2-30 2 26 6-2 3-6 4 0 4 8 4-3 4 4h5" fill="none" stroke="#7fd1b8" stroke-width="1.200"/></svg></div>
        <div class="dock-item running"><svg viewBox="0 0 60 60"><defs><linearGradient id="dsc" x1="0" y1="0" x2="0" y2="1"><stop offset="0" stop-color="#7b80fb"/><stop offset="1" stop-color="#5460ee"/></linearGradient></defs><rect width="60" height="60" rx="13" fill="url(#dsc)"/><path fill="#fff" d="M16 17c8-3.500 20-3.500 28 0 5 8 7 15 7 23-4 3-8 5-11 5.500l-2.500-4c-5 1.500-10 1.500-15 0L20 45.500C17 45 13 43 9 40c0-8 2-15 7-23z"/><ellipse cx="23" cy="31" rx="4.500" ry="5" fill="#5c66f0"/><ellipse cx="37" cy="31" rx="4.500" ry="5" fill="#5c66f0"/></svg></div>
        <div class="dock-item running"><svg viewBox="0 0 60 60"><defs><linearGradient id="tgm" x1="0" y1="0" x2="0" y2="1"><stop offset="0" stop-color="#2fa6ec"/><stop offset="1" stop-color="#2b8fe2"/></linearGradient></defs><rect width="60" height="60" rx="13" fill="url(#tgm)"/><path fill="#fff" d="M9 31 46 18l-3 28-1.500.500L29 34l11-11-20 13-2 .500z"/></svg><span class="dock-badge">..03</span></div>
        <div class="dock-item running"><svg viewBox="0 0 60 60"><rect width="60" height="60" rx="13" fill="#f4f2f5"/><path fill="#e8453c" d="M30 4a26 26 0 0 1 22.500 13H30a13 13 0 0 0-11.300 6.500L7.500 17A26 26 0 0 1 30 4z"/><path fill="#34a853" d="M7.500 17l11.200 19.500a13 13 0 0 0 22.600 0L30 56A26 26 0 0 1 7.500 17z"/><path fill="#fbbc05" d="M30 17h22.500A26 26 0 0 1 30 56l11.300-19.500A13 13 0 0 0 30 17z"/><circle cx="30" cy="30" r="12.500" fill="#fff"/><circle cx="30" cy="30" r="10" fill="#3b7be8"/></svg></div>
        <div class="dock-item running"><svg viewBox="0 0 60 60"><defs><linearGradient id="tmg" x1="0" y1="0" x2="0" y2="1"><stop offset="0" stop-color="#d4e0e0"/><stop offset="1" stop-color="#8f8f8a"/></linearGradient></defs><rect width="60" height="60" rx="13" fill="url(#tmg)"/><rect x="2" y="2" width="56" height="56" rx="11" fill="#000"/><rect x="6" y="6" width="48" height="48" rx="7" fill="#232323"/><path d="M10 12l7 4-7 4" fill="none" stroke="#f0f0f0" stroke-width="1.600"/><path d="M20 22h8" stroke="#f0f0f0" stroke-width="2"/></svg></div>
        <div class="dock-item running"><svg viewBox="0 0 60 60"><rect width="60" height="60" rx="13" fill="#4b4b4b"/><path fill="#fd9a0b" d="M13 20 46 9v14L13 34z"/><path fill="#e2850c" d="M13 22l33 11v12L13 34z"/><path fill="#fd9a0b" d="M13 39l33-11v13L13 51z"/></svg></div>
        <div class="dock-item running"><svg viewBox="0 0 60 60"><rect width="60" height="60" rx="13" fill="#fff"/><path fill="#0065a9" d="M43 6 20 28 10 20l-4 3 9 9-9 9 4 3 10-8 23 22z"/><path fill="#007acc" d="M43 6 20 28l6 4 17-13z"/><path fill="#1f9cf0" d="M43 6l10 5v40l-10 5zM43 19 31 32l12 13z"/></svg></div>
        <i class="dock-sep dock-sep-2"></i>
        <div class="dock-thumb thumb-a"><i></i><i></i><i></i><i></i><i></i><span class="thumb-cal"><b>JUL</b>17</span></div>
        <div class="dock-thumb thumb-b"><i></i><i></i><i></i><i></i><span class="thumb-mon"></span></div>
        <div class="dock-trash"><svg viewBox="0 0 52 68" width="52" height="68"><defs><linearGradient id="tr" x1="0" y1="0" x2="0" y2="1"><stop offset="0" stop-color="#bdbdc2"/><stop offset="1" stop-color="#efeff1"/></linearGradient></defs><path fill="url(#tr)" d="M3 14h46l-4 50c0 3-6 4-19 4S7 67 7 64z"/><path d="M16 20l2 40M26 20v40M36 20l-2 40" stroke="#fff" stroke-opacity=".5" stroke-width="2"/><ellipse cx="26" cy="14" rx="24" ry="7" fill="#8c8c92"/><path fill="#e9e9ec" d="M6 13l6-10 5 8 6-11 5 10 7-9 4 10 7 2-20 6z"/><path fill="#6d8fb0" d="M24 6l4 7h-6z"/></svg></div>
    </div>
</body>
</html>
```

FILE: styles.css
```css
* {
    box-sizing: border-box;
}
html, body {
    margin: 0;
    padding: 0;
}
body {
    width: 2880px;
    height: 1800px;
    overflow: hidden;
    font-family: "Open Sans", "Noto Sans", sans-serif;
    background: linear-gradient(90deg, #06001a 0%, #0d0030 35%, #1c0050 62%, #3d0068 70%, #160048 78%, #0c0032 100%);
    color: #323130;
}
.defs {
    position: absolute;
}
svg {
    display: block;
    flex: none;
}
h1, h2, p, ul {
    margin: 0;
    padding: 0;
}

/* mac menu bar */
.menubar {
    height: 48px;
    display: flex;
    justify-content: space-between;
    align-items: center;
    background: linear-gradient(90deg, #5a00a8 0%, #4300b4 50%, #3600b8 100%);
    color: #fff;
    font-family: Inter, "Liberation Sans", sans-serif;
    font-size: 25.6px;
    padding-left: 41px;
}
.menu-left {
    display: flex;
    align-items: center;
    gap: 40.5px;
}
.apple {
    width: 38px;
    height: 38px;
    margin: -6px -9px 0 -5px;
    opacity: .95;
}
.menu-app {
    font-weight: 700;
}
.menu-right {
    display: flex;
    align-items: center;
    width: 884px;
}
.st-play { margin-left: 35px; }
.status-input { margin-left: 40px; }
.st-moon { margin-left: 47px; }
.st-batt { margin-left: 38px; }
.st-wifi { margin-left: 37px; }
.st-find { margin-left: 36px; }
.st-ctrl { margin-left: 36px; }
.st-siri { margin-left: 31px; }
.status-tg {
    width: 38px;
    height: 44px;
    position: relative;
}
.status-tg svg {
    position: absolute;
    top: 10px;
    left: 2px;
}
.status-badge {
    position: absolute;
    left: 0;
    top: 21px;
    width: 37px;
    height: 23px;
    border-radius: 11px;
    background: #77767f;
    color: #ddd;
    font-size: 15px;
    line-height: 23px;
    text-align: center;
}
.status-input {
    width: 32px;
    height: 32px;
    border-radius: 5px;
    background: #f0ecfb;
    color: #3a00b0;
    font-size: 23px;
    line-height: 32px;
    text-align: center;
}
.clock {
    margin-left: 33px;
    font-size: 25.5px;
    white-space: nowrap;
}

/* browser window */
.window {
    position: relative;
    width: 2875px;
    height: 1642px;
    margin-top: 2px;
    border-radius: 20px 20px 18px 18px;
    overflow: hidden;
    background: #fff;
    border-top: 2px solid #7d7d7d;
    display: flex;
    flex-direction: column;
}
.tabstrip {
    height: 78px;
    flex: none;
    display: flex;
    align-items: flex-end;
    background: #202124;
    font-family: Inter, "Liberation Sans", sans-serif;
}
.lights {
    width: 178px;
    height: 68px;
    flex: none;
    display: flex;
    align-items: center;
    gap: 17px;
    padding: 0 0 12px 41px;
}
.light {
    width: 24px;
    height: 24px;
    border-radius: 50%;
}
.red { background: #ff5f57; }
.yellow { background: #febc2e; }
.green { background: #28c840; }
.tab {
    width: 129.44px;
    height: 68px;
    flex: none;
    position: relative;
    display: flex;
    align-items: center;
    padding: 0 0 12px 21px;
}
.tab::after {
    content: "";
    position: absolute;
    right: 0;
    top: 16px;
    width: 2px;
    height: 28px;
    background: #4a4b4e;
}
.tab.no-sep::after,
.tab.active::after {
    display: none;
}
.tab.active {
    background: #3c3c3c;
    border-radius: 20px 20px 0 0;
    width: 118px;
    margin: 0 5.72px;
    padding-left: 15px;
}
.tab.active::before {
    content: "";
    position: absolute;
    left: -14px;
    right: -14px;
    bottom: 0;
    height: 14px;
    background:
        radial-gradient(circle at 0 0, #202124 14px, transparent 14.5px) left bottom / 14px 14px no-repeat,
        radial-gradient(circle at 100% 0, #202124 14px, transparent 14.5px) right bottom / 14px 14px no-repeat,
        linear-gradient(#3c3c3c, #3c3c3c) left bottom / 14px 14px no-repeat,
        linear-gradient(#3c3c3c, #3c3c3c) right bottom / 14px 14px no-repeat;
}
.fav {
    width: 32px;
    height: 32px;
}
.fav-white {
    background: #fff;
}
.tab-title {
    width: 40px;
    margin-left: 15px;
    overflow: hidden;
    white-space: nowrap;
    color: #c7c7c7;
    font-size: 24px;
    -webkit-mask-image: linear-gradient(90deg, #000 60%, transparent 100%);
    mask-image: linear-gradient(90deg, #000 60%, transparent 100%);
}
.tab-close {
    margin-left: 30px;
    color: #e3e3e3;
    font-size: 23px;
    font-family: "DejaVu Sans", sans-serif;
}
.new-tab {
    width: 24px;
    height: 24px;
    margin: 0 0 22px 21px;
}
.tab-search {
    width: 56px;
    height: 56px;
    margin: 0 0 12px 124px;
    border-radius: 20px;
    background: #3a3a3a;
    display: flex;
    align-items: center;
    justify-content: center;
}

.toolbar {
    height: 94px;
    flex: none;
    display: flex;
    align-items: center;
    padding: 0 0 0 30px;
    background: #3c3c3c;
    border-bottom: 2px solid #333;
    font-family: Inter, "Liberation Sans", sans-serif;
}
.nav-btn {
    width: 28px;
    height: 28px;
}
.nav-forward {
    margin-left: 43px;
}
.nav-reload {
    margin-left: 45px;
}
.urlbar {
    width: 2316px;
    height: 68px;
    margin-left: 38px;
    display: flex;
    align-items: center;
    padding: 0 34px 0 10px;
    background: #282828;
    border-radius: 34px;
}
.site-info {
    width: 48px;
    height: 48px;
    flex: none;
    border-radius: 50%;
    background: #3c3c3c;
    display: flex;
    align-items: center;
    justify-content: center;
}
.url {
    margin-left: 17px;
    width: 2112px;
    flex: none;
    color: #e3e3e3;
    font-size: 27.8px;
    white-space: nowrap;
    overflow: hidden;
}
.url-icon {
    width: 36px;
    height: 36px;
    margin-left: 0;
}
.url-star {
    margin-left: 29px;
}
.incognito {
    width: 208px;
    height: 68px;
    margin-left: 21px;
    display: flex;
    align-items: center;
    gap: 14px;
    padding-left: 25px;
    background: #282828;
    border-radius: 34px;
    color: #e3e3e3;
    font-size: 25.5px;
}
.kebab {
    margin-left: 42px;
    display: flex;
    flex-direction: column;
    gap: 9px;
}
.kebab i {
    width: 6px;
    height: 6px;
    border-radius: 50%;
    background: #c7c7c7;
}

/* azure top bar */
.azurebar {
    height: 80px;
    flex: none;
    display: flex;
    align-items: center;
    background: #0c74d4;
    color: #fff;
}
.hamburger {
    width: 28px;
    margin-left: 34px;
    display: flex;
    flex-direction: column;
    gap: 7px;
}
.hamburger i {
    height: 2px;
    background: #fff;
}
.brand {
    margin-left: 74px;
    font-size: 28.6px;
    font-weight: 600;
    letter-spacing: -.3px;
    width: 617px;
    white-space: nowrap;
}
.global-search {
    width: 1041px;
    height: 52px;
    display: flex;
    align-items: center;
    gap: 17px;
    padding-left: 16px;
    background: #b3d6f2;
    border-radius: 3px;
    color: #0f5a9c;
    font-size: 25.2px;
    letter-spacing: -.25px;
}
.copilot {
    width: 177px;
    height: 52px;
    margin-left: 32px;
    display: flex;
    align-items: center;
    gap: 12px;
    padding-left: 25px;
    background: #fff;
    border-radius: 5px;
    color: #243a5e;
    font-size: 25.5px;
    font-weight: 600;
    letter-spacing: -.2px;
}
.bar-icon {
    width: 34px;
    height: 34px;
    margin-left: 46px;
}
.bar-icon.bar-first {
    margin-left: 54px;
}
.bar-bell {
    position: relative;
    margin-left: 46px;
}
.bar-bell .bar-icon {
    margin-left: 0;
}
.bell-badge {
    position: absolute;
    top: -16px;
    left: 13px;
    width: 30px;
    height: 30px;
    border-radius: 50%;
    background: #fff;
    color: #0c74d4;
    font-size: 19px;
    line-height: 30px;
    text-align: center;
}
.account {
    margin-left: 63px;
    padding-top: 5px;
    width: 334px;
    white-space: nowrap;
}
.account-name {
    font-size: 26.2px;
    line-height: 32px;
    letter-spacing: -.25px;
}
.account-dir {
    font-size: 19.5px;
    font-weight: 600;
    line-height: 28px;
    letter-spacing: -.2px;
}
.avatar {
    position: relative;
}
.avatar-lock {
    position: absolute;
    right: -4px;
    bottom: -4px;
    width: 28px;
    height: 28px;
    border-radius: 50%;
    background: #0c74d4;
    display: flex;
    align-items: center;
    justify-content: center;
}

/* portal page behind the blade */
.portal {
    position: relative;
    flex: 1;
    overflow: hidden;
    background: #fff;
    font-size: 25.5px;
    letter-spacing: -.38px;
}
.breadcrumb {
    width: 1164px;
    height: 72px;
    display: flex;
    align-items: center;
    padding-left: 40px;
    overflow: hidden;
    white-space: nowrap;
    color: #0067b8;
    font-size: 26.8px;
    letter-spacing: -.2px;
}
.crumb-sep {
    width: 11px;
    height: 22px;
    margin: 0 16px;
}
.resource-header {
    width: 1164px;
    height: 126px;
    display: flex;
    padding-left: 48px;
    overflow: hidden;
    white-space: nowrap;
}
.resource-key {
    width: 36px;
    height: 57px;
    margin: 20px 32px 0 0;
}
.resource-title {
    font-size: 45.4px;
    font-weight: 400;
    line-height: 62px;
    letter-spacing: -.5px;
    color: #201f1e;
}
.resource-title b {
    font-weight: 600;
    margin-right: -9px;
}
.resource-sub {
    font-size: 23px;
    line-height: 30px;
    margin-top: 2px;
    color: #605e5c;
}
.resource-body {
    width: 1164px;
    display: flex;
    overflow: hidden;
}
.sidebar {
    width: 530px;
    flex: none;
}
.side-top {
    display: flex;
    align-items: center;
    padding-left: 32px;
}
.side-search {
    width: 373px;
    height: 47px;
    display: flex;
    align-items: center;
    gap: 12px;
    padding-left: 10px;
    border: 2px solid #8a8886;
    border-radius: 4px;
    color: #605e5c;
}
.side-sort {
    width: 14px;
    height: 24px;
    margin-left: 26px;
}
.side-collapse {
    width: 20px;
    height: 20px;
    margin-left: 42px;
}
.nav {
    list-style: none;
    margin-top: 16px;
}
.nav li {
    height: 63.8px;
    display: flex;
    align-items: center;
    padding-left: 41px;
    white-space: nowrap;
}
.nav-icon {
    width: 28px;
    height: 36px;
    margin-right: 19px;
}
.nav-chev {
    width: 12px;
    height: 26px;
    margin: 0 27px 0 8px;
}
.nav li.current {
    background: #edebe9;
    border-left: 4px solid #0c74d4;
    padding-left: 37px;
    font-weight: 600;
    letter-spacing: -.5px;
}
.content {
    width: 634px;
    flex: none;
    padding-left: 40px;
    overflow: hidden;
    white-space: nowrap;
}
.cmdbar {
    height: 59px;
    display: flex;
    align-items: center;
    gap: 31px;
    padding: 0 0 11px 17px;
    border-bottom: 2px solid #d2d0ce;
}
.cmd {
    display: flex;
    align-items: center;
    gap: 17px;
}
.content-note {
    line-height: 36px;
    margin-top: 41px;
}
.content-label {
    line-height: 36px;
    margin-top: 39px;
}
.required {
    color: #a4262c;
}
.content-select {
    width: 1200px;
    height: 47px;
    margin-top: 8px;
    padding-left: 16px;
    line-height: 42px;
    border: 2px solid #8a8886;
    border-radius: 4px;
}
.grid-head {
    height: 71px;
    display: flex;
    align-items: center;
    padding: 0 0 2px 32px;
    font-weight: 600;
    border-bottom: 2px solid #e1dfdd;
}
.col-role {
    width: 450px;
}
.grid-empty {
    line-height: 36px;
    margin-top: 1px;
}

/* role assignment blade */
.blade {
    position: absolute;
    left: 1164px;
    top: 0;
    right: 0;
    bottom: 0;
    display: flex;
    flex-direction: column;
    padding: 0 41px 0 40px;
    background: #fff;
    box-shadow: -4px 0 18px rgba(0,0,0,.18);
}
.blade-head {
    height: 170px;
    flex: none;
    display: flex;
    justify-content: space-between;
    align-items: flex-start;
    padding-right: 20px;
}
.blade-head h2 {
    font-size: 46.4px;
    font-weight: 600;
    line-height: 94px;
    letter-spacing: -.55px;
    color: #201f1e;
}
.blade-close {
    width: 26px;
    height: 26px;
    margin-top: 34px;
}
.field {
    margin-bottom: 25.7px;
}
.field label {
    height: 36px;
    margin-bottom: 7px;
    padding-bottom: 2px;
    display: flex;
    align-items: center;
    gap: 15px;
    line-height: 34px;
}
.info {
    width: 24px;
    height: 24px;
}
.select {
    height: 47px;
    display: flex;
    align-items: center;
    gap: 12px;
    padding: 0 0 2px 16px;
    border: 2px solid #8a8886;
    border-radius: 4px;
}
.select.focused {
    border: 4px solid #0c74d4;
    padding-left: 14px;
    gap: 6px;
    height: 48px;
}
.caret {
    width: 28px;
    height: 16px;
    margin-left: auto;
    margin-right: 16px;
}
.learn-more {
    line-height: 34px;
    color: #0c74d4;
}
.blade-foot {
    margin: auto -41px 0 -40px;
    height: 129px;
    display: flex;
    gap: 6px;
    padding: 40px 0 0 40px;
    border-top: 2px solid #e1dfdd;
}
.btn {
    height: 48px;
    padding: 0 0 4px;
    border-radius: 4px;
    font-family: inherit;
    font-size: 25.5px;
    font-weight: 600;
    letter-spacing: -.2px;
}
.btn-primary {
    width: 160px;
    background: #0c74d4;
    border: none;
    color: #fff;
}
.btn-default {
    width: 173px;
    background: #fff;
    border: 2px solid #323130;
    color: #323130;
}
.dock-shade {
    position: absolute;
    left: 0;
    right: 0;
    bottom: 0;
    height: 72px;
    pointer-events: none;
    background: linear-gradient(180deg, rgba(0,0,0,0) 0%, rgba(0,0,0,.14) 100%);
    -webkit-mask-image: linear-gradient(90deg, #000 94%, transparent 100%);
    mask-image: linear-gradient(90deg, #000 94%, transparent 100%);
}

/* dock */
.dock {
    width: 2499px;
    height: 95px;
    margin: 2px 0 0 190px;
    display: flex;
    gap: 19px;
    padding: 14px 0 0 15px;
    border: 2px solid #8d7ba6;
    border-width: 2px 1px 3px;
    border-radius: 28px;
    background: linear-gradient(90deg, #605476 0%, #67567f 45%, #7b5694 62%, #8e57aa 75%, #7c5695 90%, #695684 100%);
}
.dock-item {
    position: relative;
    width: 59px;
    height: 60px;
    flex: none;
}
.dock-item svg {
    width: 59px;
    height: 60px;
}
.dock-item.running::after {
    content: "";
    position: absolute;
    left: 25px;
    top: 69px;
    width: 8px;
    height: 8px;
    border-radius: 50%;
    background: #07031c;
}
.dock-sep {
    width: 2px;
    height: 72px;
    flex: none;
    margin: 11px 7px 0 8px;
    background: #3f2f63;
}
.dock-sep-2 {
    margin: 11px 1px 0 6px;
}
.dock-cal-m {
    fill: #fff;
    font-family: Inter, sans-serif;
    font-size: 12px;
    font-weight: 600;
    text-anchor: middle;
}
.dock-cal-d {
    fill: #222;
    font-family: Inter, sans-serif;
    font-size: 36px;
    font-weight: 300;
    text-anchor: middle;
}
.dock-tv {
    fill: #fff;
    font-family: Inter, sans-serif;
    font-size: 24px;
    font-weight: 500;
    text-anchor: middle;
}
.dock-badge {
    position: absolute;
    top: -8px;
    right: -8px;
    width: 33px;
    height: 32px;
    border-radius: 50%;
    background: #ee2f3f;
    color: #fff;
    font-family: Inter, sans-serif;
    font-size: 13px;
    line-height: 32px;
    text-align: center;
}
.dock-thumb {
    position: relative;
    width: 69px;
    height: 42px;
    flex: none;
    margin: 9px 0 0 -4px;
    padding: 6px 5px;
    background: #f6f4f7;
}
.thumb-b {
    width: 68px;
    height: 40px;
    margin: 10px 0 0 -9px;
    background: #fbfbfc;
}
.dock-thumb i {
    display: block;
    height: 1px;
    margin-bottom: 6px;
    background: #c9c6cc;
}
.thumb-cal {
    position: absolute;
    right: -6px;
    top: 28px;
    width: 24px;
    height: 30px;
    border-radius: 4px;
    background: #f8f8f8;
    color: #222;
    font-family: Inter, sans-serif;
    font-size: 13px;
    line-height: 17px;
    text-align: center;
}
.thumb-cal b {
    display: block;
    height: 11px;
    border-radius: 4px 4px 0 0;
    background: #f2504f;
    color: #fff;
    font-size: 7px;
    font-weight: 600;
    line-height: 11px;
}
.thumb-mon {
    position: absolute;
    right: 0;
    top: 24px;
    width: 20px;
    height: 26px;
    border-radius: 4px;
    background: #14241f;
    border: 1px solid #888;
}
.dock-trash {
    margin: -5px 0 0 0;
}
```
